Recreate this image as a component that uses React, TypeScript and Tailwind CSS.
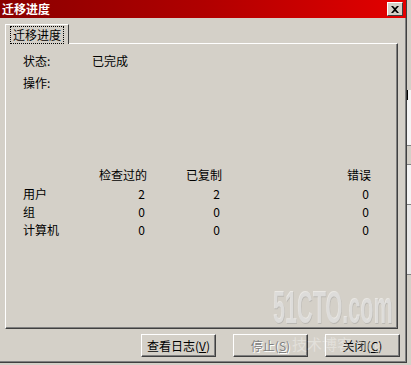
import React from "react";

const font = { fontFamily: '"Noto Sans CJK SC", "Liberation Sans", sans-serif' };

const rows = [
  { name: "用户", checked: 2, copied: 2, errors: 0 },
  { name: "组", checked: 0, copied: 0, errors: 0 },
  { name: "计算机", checked: 0, copied: 0, errors: 0 },
];

function WinButton({
  children,
  disabled,
}: {
  children: React.ReactNode;
  disabled?: boolean;
}) {
  return (
    <button
      type="button"
      className={
        "w-[75px] h-[23px] flex items-center justify-center text-[12px] leading-none border border-t-white border-l-white border-r-[#404040] border-b-[#404040] shadow-[inset_-1px_-1px_0_#808080] bg-[#d4d0c8] " +
        (disabled ? "text-[#808080] [text-shadow:1px_1px_0_#fff]" : "text-black")
      }
    >
      {children}
    </button>
  );
}

export default function App() {
  return (
    <div className="w-[411px] h-[365px] flex bg-[#d4d0c8] overflow-hidden" style={font}>
      <div className="relative w-[407px] h-[363px] flex flex-col border-r border-b border-[#404040] shadow-[inset_-1px_-1px_0_#808080]">
        {/* barre de titre */}
        <div className="h-[18px] flex items-center justify-between pl-[2px] pr-[3px] bg-gradient-to-r from-[#8a0000] via-[#b00000] to-[#e40000]">
          <span className="text-white text-[12px] font-bold leading-none">迁移进度</span>
          <div className="w-[16px] h-[14px] flex items-center justify-center bg-[#d4d0c8] border border-t-white border-l-white border-r-[#404040] border-b-[#404040]">
            <svg width="8" height="7" viewBox="0 0 8 7">
              <path d="M0 0h2l2 2 2-2h2L5 3.5 8 7H6L4 5 2 7H0l3-3.5z" fill="#000" />
            </svg>
          </div>
        </div>

        <div className="flex flex-col px-[5px] pt-[6px]">
          {/* onglet */}
          <div className="flex">
            <div className="h-[20px] w-[64px] -mb-[1px] z-10 bg-[#d4d0c8] border-t border-l border-white border-r border-r-[#404040] flex items-center justify-center">
              <span className="text-[12px] leading-none px-[2px] py-[2px] outline outline-1 outline-dotted outline-black">
                迁移进度
              </span>
            </div>
          </div>

          {/* panneau */}
          <div className="h-[286px] w-[393px] border border-t-white border-l-white border-r-[#404040] border-b-[#404040] shadow-[inset_-1px_-1px_0_#808080] pl-[17px] pt-[10px] text-[12px] text-black">
            <div className="flex h-[14px] items-center">
              <span className="w-[69px]">状态:</span>
              <span>已完成</span>
            </div>
            <div className="flex h-[14px] items-center mt-[8px]">
              <span>操作:</span>
            </div>

            <div className="mt-[76px] grid grid-cols-[75px_49px_75px_149px]">
              <span />
              <span className="text-right h-[19px]">检查过的</span>
              <span className="text-right">已复制</span>
              <span className="text-right">错误</span>
              {rows.map((r) => (
                <React.Fragment key={r.name}>
                  <span className="h-[18px]">{r.name}</span>
                  <span className="text-right pr-[2px]">{r.checked}</span>
                  <span className="text-right pr-[2px]">{r.copied}</span>
                  <span className="text-right pr-[2px]">{r.errors}</span>
                </React.Fragment>
              ))}
            </div>
          </div>

          {/* boutons */}
          <div className="flex justify-end gap-[17px] mt-[5px] pr-[1px]">
            <WinButton>
              查看日志(<u>V</u>)
            </WinButton>
            <WinButton disabled>
              停止(<u>S</u>)
            </WinButton>
            <WinButton>
              关闭(<u>C</u>)
            </WinButton>
          </div>
        </div>

        {/* filigrane */}
        <div className="absolute left-[273px] top-[284px] w-[130px] pointer-events-none select-none">
          <span
            className="block text-[46px] font-bold leading-none text-white/50 origin-left scale-x-[0.47] whitespace-nowrap [text-shadow:1px_1px_0_rgba(150,150,150,0.4)]"
            style={{ fontFamily: '"Liberation Sans", sans-serif' }}
          >
            51CTO.com
          </span>
        </div>
        <div className="absolute left-[292px] top-[336px] pointer-events-none select-none text-[15px] leading-none text-white/35 whitespace-nowrap">
          技术博客 <span className="text-[12px]">Blog</span>
        </div>
      </div>

      {/* fenêtre voisine */}
      <div className="flex-1 flex flex-col bg-[#f4f4f4]">
        <div className="h-[90px] bg-[#d4d0c8]" />
        <div className="h-[10px] border-l border-black" />
        <div className="h-[45px]" />
        <div className="h-[20px] border-y border-[#808080] bg-[#d4d0c8]" />
        <div className="h-[40px] border-b border-[#808080]" />
        <div className="h-[70px] bg-[#e8e8e8] border-b border-[#808080]" />
        <div className="flex-1 bg-[#d4d0c8]" />
      </div>
    </div>
  );
}
